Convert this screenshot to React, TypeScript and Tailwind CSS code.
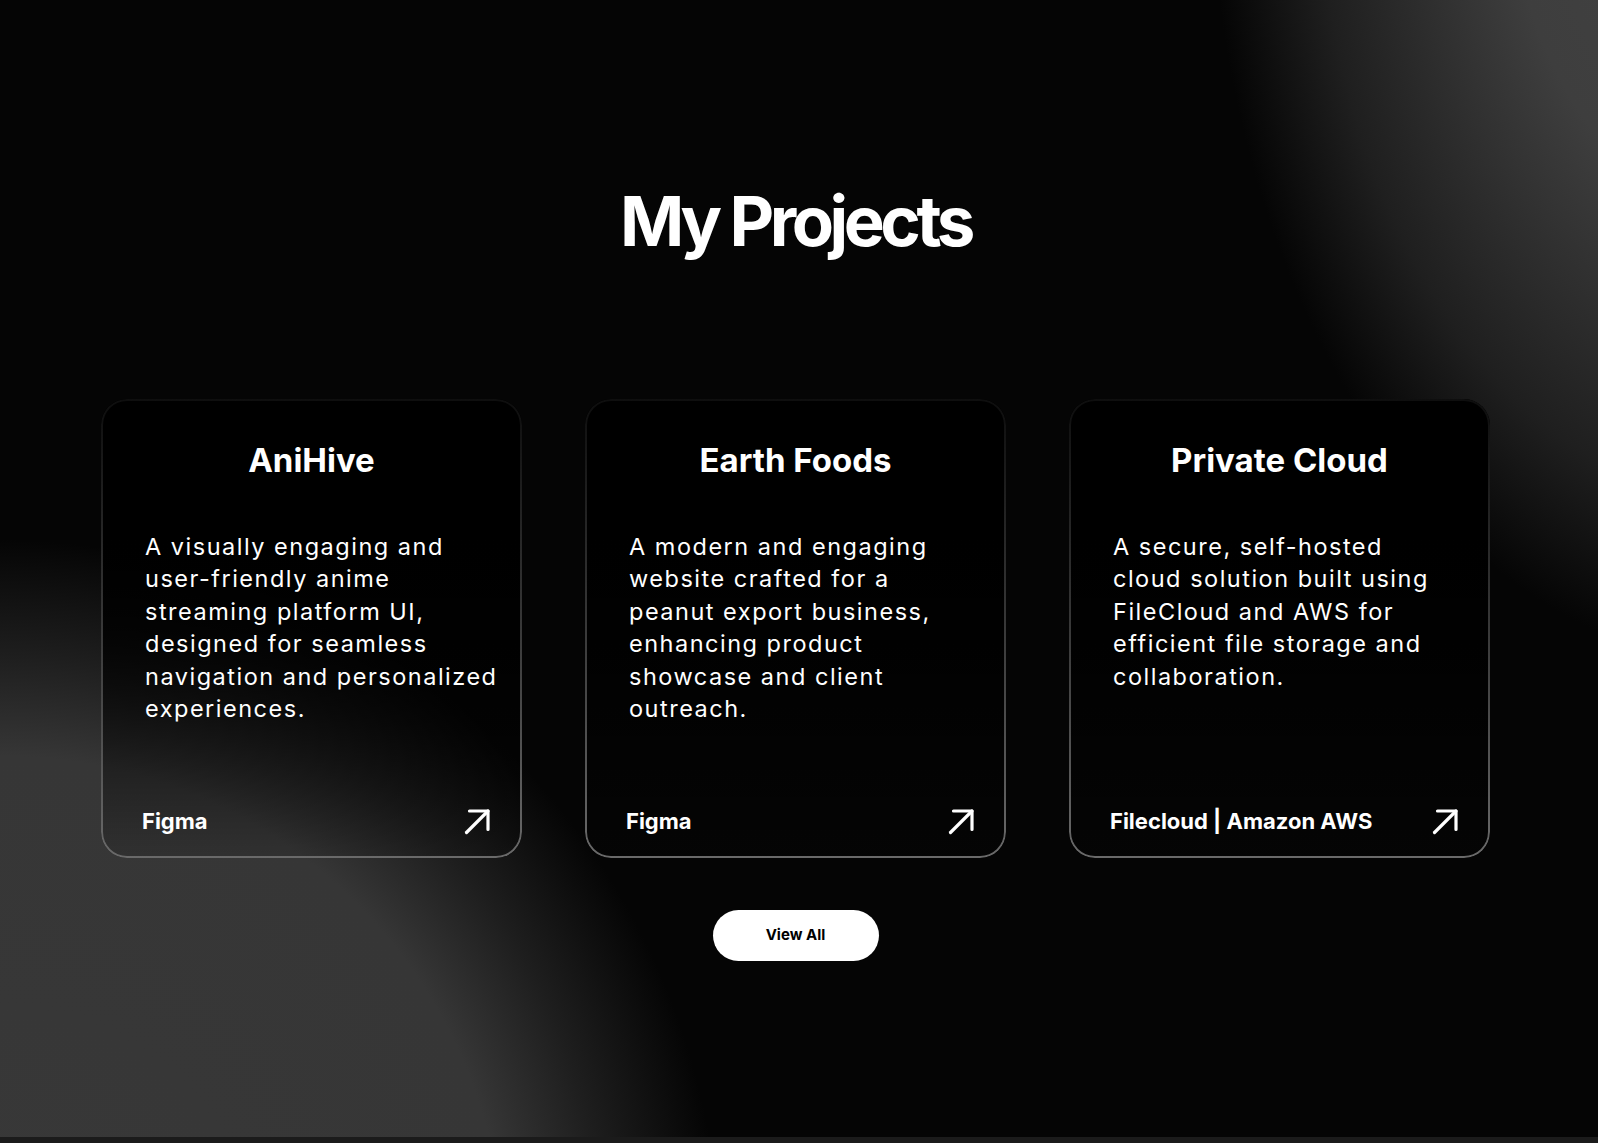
const projects = [
  {
    title: 'AniHive',
    lines: [
      'A visually engaging and',
      'user-friendly anime',
      'streaming platform UI,',
      'designed for seamless',
      'navigation and personalized',
      'experiences.',
    ],
    tech: 'Figma',
  },
  {
    title: 'Earth Foods',
    lines: [
      'A modern and engaging',
      'website crafted for a',
      'peanut export business,',
      'enhancing product',
      'showcase and client',
      'outreach.',
    ],
    tech: 'Figma',
  },
  {
    title: 'Private Cloud',
    lines: [
      'A secure, self-hosted',
      'cloud solution built using',
      'FileCloud and AWS for',
      'efficient file storage and',
      'collaboration.',
    ],
    tech: 'Filecloud | Amazon AWS',
  },
];

function ArrowIcon() {
  return (
    <svg width="27" height="27" viewBox="0 0 27 27" fill="none" stroke="white" strokeWidth="3.2" strokeLinecap="round" strokeLinejoin="round">
      <path d="M2.5 24.5 24 3" />
      <path d="M5.5 3H24v18.5" />
    </svg>
  );
}

function ProjectCard({ title, lines, tech }: { title: string; lines: string[]; tech: string }) {
  return (
    <div className="relative flex h-[459px] flex-col rounded-[26px] bg-linear-to-b from-black from-30% via-black/85 to-black/10 pt-[41px]">
      {/* gradient ring */}
      <div className="pointer-events-none absolute inset-0 rounded-[26px] bg-linear-to-b from-[#0e0e0e] to-[#6a6a6a] p-[2px] [mask:linear-gradient(#000_0_0)_content-box_exclude,linear-gradient(#000_0_0)]" />
      <h3 className="text-center text-[33px] font-bold leading-[40px] text-white">{title}</h3>
      <p className="mt-[51px] pl-[44px] text-[23.5px] font-normal leading-[32.4px] tracking-[0.064em] text-white">
        {lines.map((l, i) => (
          <span key={i} className="block whitespace-nowrap">
            {l}
          </span>
        ))}
      </p>
      <div className="mt-auto flex items-center justify-between pb-[23px] pl-[41px] pr-[31px]">
        <span className="text-[22px] font-bold leading-[28px] text-white">{tech}</span>
        <ArrowIcon />
      </div>
    </div>
  );
}

export default function App() {
  return (
    <div className="bg-[#1b1b1b] font-['Inter','Noto_Sans',sans-serif]">
      <section className="flex h-[1137px] flex-col items-center bg-[#050505] bg-[radial-gradient(ellipse_540px_815px_at_1750px_-150px,#444444_0%,#3e3e3e_45%,#1f1f1f_80%,transparent_100%),radial-gradient(circle_720px_at_0px_1260px,#383838_0%,#363636_70%,#1e1e1e_84%,transparent_100%)] pr-[7px] pt-[186px]">
        <h2 className="text-[69px] font-bold leading-[70px] tracking-[-0.065em] text-white">My Projects</h2>

        <div className="mt-[143px] grid w-[1389px] grid-cols-3 gap-[63px]">
          {projects.map((p) => (
            <ProjectCard key={p.title} {...p} />
          ))}
        </div>

        <button className="mt-[52px] h-[51px] w-[166px] rounded-full bg-white text-[15px] font-bold text-black">
          View All
        </button>
      </section>
      <div className="h-[6px]" />
    </div>
  );
}
